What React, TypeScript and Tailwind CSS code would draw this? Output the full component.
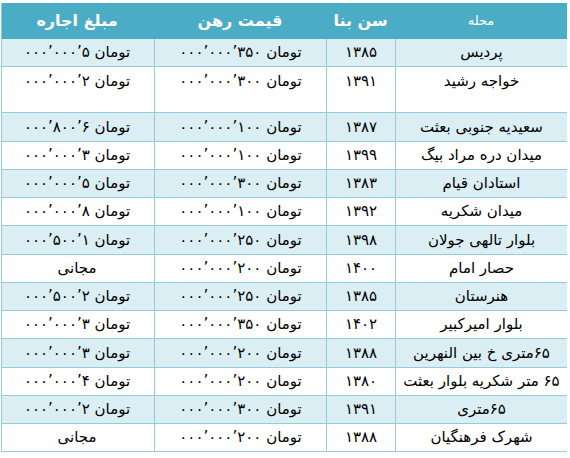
const rows: {
  area: string;
  year: string;
  rahn: string;
  rent: string;
  tall?: boolean;
}[] = [
  { area: "پردیس", year: "۱۳۸۵", rahn: "۰۰۰’۰۰۰’۳۵۰ تومان", rent: "۰۰۰’۰۰۰’۵ تومان" },
  { area: "خواجه رشید", year: "۱۳۹۱", rahn: "۰۰۰’۰۰۰’۳۰۰ تومان", rent: "۰۰۰’۰۰۰’۲ تومان", tall: true },
  { area: "سعیدیه جنوبی بعثت", year: "۱۳۸۷", rahn: "۰۰۰’۰۰۰’۱۰۰ تومان", rent: "۰۰۰’۸۰۰’۶ تومان" },
  { area: "میدان دره مراد بیگ", year: "۱۳۹۹", rahn: "۰۰۰’۰۰۰’۱۰۰ تومان", rent: "۰۰۰’۰۰۰’۳ تومان" },
  { area: "استادان قیام", year: "۱۳۸۳", rahn: "۰۰۰’۰۰۰’۳۰۰ تومان", rent: "۰۰۰’۰۰۰’۵ تومان" },
  { area: "میدان شکریه", year: "۱۳۹۲", rahn: "۰۰۰’۰۰۰’۱۰۰ تومان", rent: "۰۰۰’۰۰۰’۸ تومان" },
  { area: "بلوار تالهی جولان", year: "۱۳۹۸", rahn: "۰۰۰’۰۰۰’۲۵۰ تومان", rent: "۰۰۰’۵۰۰’۱ تومان" },
  { area: "حصار امام", year: "۱۴۰۰", rahn: "۰۰۰’۰۰۰’۲۰۰ تومان", rent: "مجانی" },
  { area: "هنرستان", year: "۱۳۸۵", rahn: "۰۰۰’۰۰۰’۲۵۰ تومان", rent: "۰۰۰’۵۰۰’۲ تومان" },
  { area: "بلوار امیرکبیر", year: "۱۴۰۲", rahn: "۰۰۰’۰۰۰’۳۵۰ تومان", rent: "۰۰۰’۰۰۰’۳ تومان" },
  { area: "۶۵متری خ بین النهرین", year: "۱۳۸۸", rahn: "۰۰۰’۰۰۰’۲۰۰ تومان", rent: "۰۰۰’۰۰۰’۳ تومان" },
  { area: "۶۵ متر شکریه بلوار بعثت", year: "۱۳۸۰", rahn: "۰۰۰’۰۰۰’۲۰۰ تومان", rent: "۰۰۰’۰۰۰’۴ تومان" },
  { area: "۶۵متری", year: "۱۳۹۱", rahn: "۰۰۰’۰۰۰’۳۰۰ تومان", rent: "۰۰۰’۰۰۰’۲ تومان" },
  { area: "شهرک فرهنگیان", year: "۱۳۸۸", rahn: "۰۰۰’۰۰۰’۲۰۰ تومان", rent: "مجانی" },
];

const cols = "grid grid-cols-[172px_69px_172px_154px]";

export default function App() {
  return (
    <div className="w-[570px] h-[458px] bg-white pt-[3px] pl-[1px] font-['DejaVu_Sans',sans-serif] text-black">
      <div dir="rtl" className="w-[566px] border-l border-[#92cddc]">
        {/* header */}
        <div className={`${cols} h-[36px] bg-[#4bacc6] text-white`}>
          <div className="flex items-center justify-center text-[13px]">محله</div>
          <div className="flex items-center justify-center text-[16px] font-bold">سن بنا</div>
          <div className="flex items-center justify-center text-[16px] font-bold">قیمت رهن</div>
          <div className="flex items-center justify-center text-[16px] font-bold">مبلغ اجاره</div>
        </div>

        {rows.map((r, i) => (
          <div
            key={i}
            className={`${cols} border-b border-[#92cddc] ${i % 2 === 0 ? "bg-[#daeef3]" : "bg-white"} ${
              r.tall ? "h-[46px] items-start" : "h-[28.25px] items-center"
            }`}
          >
            <div className={`h-full flex justify-center border-l border-[#92cddc] text-[15px] ${r.tall ? "items-start pt-[3px]" : "items-center"}`}>
              {r.area}
            </div>
            <div className={`h-full flex justify-center border-l border-[#92cddc] text-[15px] ${r.tall ? "items-start pt-[3px]" : "items-center"}`}>
              {r.year}
            </div>
            <div className={`h-full flex justify-center border-l border-[#92cddc] text-[15px] ${r.tall ? "items-start pt-[3px]" : "items-center"}`}>
              <span dir="ltr">{r.rahn}</span>
            </div>
            <div className={`h-full flex justify-center text-[15px] ${r.tall ? "items-start pt-[3px]" : "items-center"}`}>
              <span dir="ltr">{r.rent}</span>
            </div>
          </div>
        ))}
      </div>
    </div>
  );
}
